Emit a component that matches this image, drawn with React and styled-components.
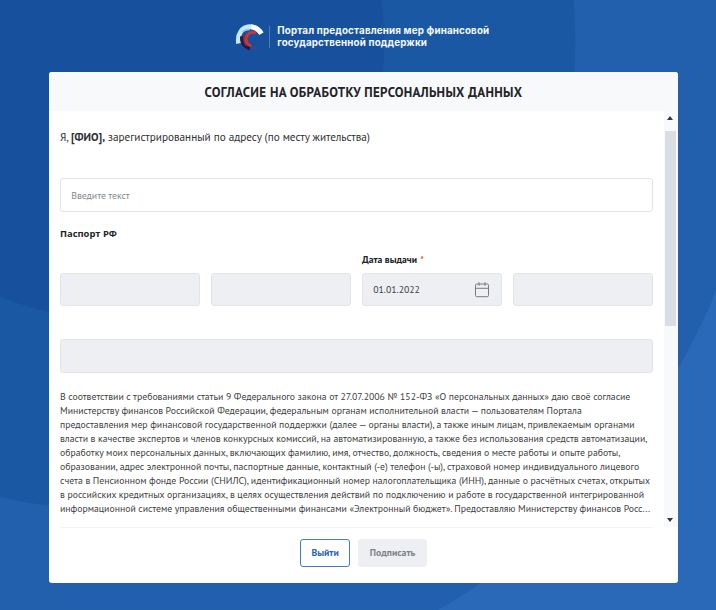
import React from "react";
import styled, { createGlobalStyle } from "styled-components";

const GlobalStyle = createGlobalStyle`
  *, *::before, *::after { box-sizing: border-box; }
  body { margin: 0; background: #2a69b8; font-family: "PT Sans", "Noto Sans", sans-serif; color: #2e3033; }
`;

const Page = styled.main`
  width: 716px;
  height: 610px;
  overflow: hidden;
  display: flex;
  flex-direction: column;
  background: radial-gradient(
    circle at 108px 42px,
    #17519d 276px, #1b58a3 277px,
    #1b58a3 467px, #2260ae 468px,
    #2260ae 656.5px, #2a69b8 657.5px
  );
`;

const Brand = styled.header`
  height: 72.3px;
  padding: 23px 0 0 235px;
  display: flex;
  align-items: flex-start;
`;

const Logo = styled.svg`
  width: 29px;
  height: 28px;
  flex: none;
`;

const BrandDivider = styled.div`
  width: 1px;
  height: 22px;
  margin: 3px 7.3px 0 5px;
  background: #4e7bb7;
`;

const BrandName = styled.div`
  margin-top: 1.7px;
  font: 650 9.8px/12.6px Inter, sans-serif;
  letter-spacing: 0.16px;
  color: #f4f8ff;
  white-space: nowrap;
`;

const Card = styled.section`
  width: 628.7px;
  height: 510.9px;
  margin-left: 49px;
  border-radius: 3px;
  overflow: hidden;
  background: #fff;
  display: flex;
  flex-direction: column;
`;

const CardHeader = styled.h1`
  margin: 0;
  height: 38.7px;
  flex: none;
  background: #f8f9fb;
  font-size: 13px;
  letter-spacing: 0.32px;
  line-height: 41px;
  font-weight: 700;
  color: #222427;
  text-align: center;
  white-space: nowrap;
`;

const CardBody = styled.div`
  display: flex;
  height: 416px;
  flex: none;
`;

const Content = styled.div`
  width: 604px;
  margin-left: 11px;
  flex: none;
  display: flex;
  flex-direction: column;
`;

const Intro = styled.p`
  margin: 19px 0 0;
  height: 14px;
  font-size: 11.2px;
  line-height: 14px;
  white-space: nowrap;
`;

const Field = styled.div`
  width: ${(p) => p.$width || "592.8px"};
  height: 33.6px;
  flex: none;
  border: 1px solid #e1e4ea;
  border-radius: 3px;
  background: ${(p) => (p.$disabled ? "#edeff3" : "#fff")};
  padding: 0 11px 0 10.3px;
  display: flex;
  align-items: center;
  justify-content: space-between;
  font-size: 9.75px;
  color: ${(p) => (p.$disabled ? "#3b3d40" : "#84878c")};
`;

const AddressField = styled(Field)`
  margin-top: 34px;
  padding-top: 1px;
`;

const WideField = styled(Field)`
  margin-top: 33px;
`;

const SectionTitle = styled.h2`
  margin: 15.7px 0 0;
  height: 14px;
  font: 700 9.4px/14px "Open Sans", "Noto Sans", sans-serif;
  color: #222427;
`;

const FieldRow = styled.div`
  margin-top: 11.4px;
  width: 592.8px;
  display: grid;
  grid-template-columns: repeat(4, 1fr);
  column-gap: 11.1px;
  align-items: end;
`;

const Label = styled.div`
  height: 20.2px;
  font-size: 9.7px;
  line-height: 14px;
  font-weight: 700;
  color: #222427;
`;

const Required = styled.span`
  margin-left: 0.8px;
  color: #e0583a;
`;

const CalendarIcon = styled.svg`
  width: 16px;
  height: 18px;
`;

const Terms = styled.p`
  margin: 17.1px 0 0;
  font-size: 9.74px;
  line-height: 13.92px;
  color: #3b3d40;
`;

const TermsLine = styled.span`
  display: block;
  white-space: nowrap;
`;

const ScrollTrack = styled.div`
  width: 13.7px;
  padding-right: 1px;
  background: #f8f9fb;
  display: flex;
  flex-direction: column;
  align-items: center;
`;

const ScrollArrow = styled.svg`
  width: 6px;
  height: 4px;
  margin: ${(p) => p.$margin};
  fill: #34373b;
`;

const ScrollThumb = styled.div`
  width: 11.4px;
  height: 194.7px;
  background: #d9dde5;
`;

const Footer = styled.footer`
  margin-left: 11px;
  width: 592.8px;
  border-top: 1px solid #f2f3f5;
  padding-top: 10.7px;
  display: flex;
  justify-content: center;
  gap: 8.3px;
  padding-left: 14px;
`;

const Button = styled.button`
  width: ${(p) => p.$width};
  height: 28.6px;
  padding: 1px 0 0;
  border: 1px solid ${(p) => (p.$muted ? "#edeff3" : "#437cc4")};
  border-radius: 3px;
  background: ${(p) => (p.$muted ? "#edeff3" : "#fff")};
  color: ${(p) => (p.$muted ? "#7d8289" : "#2765b5")};
  font: 700 9.75px/14px "PT Sans", "Noto Sans", sans-serif;
`;

const termsLines = [
  "В соответствии с требованиями статьи 9 Федерального закона от 27.07.2006 № 152-ФЗ «О персональных данных» даю своё согласие",
  "Министерству финансов Российской Федерации, федеральным органам исполнительной власти — пользователям Портала",
  "предоставления мер финансовой государственной поддержки (далее — органы власти), а также иным лицам, привлекаемым органами",
  "власти в качестве экспертов и членов конкурсных комиссий, на автоматизированную, а также без использования средств автоматизации,",
  "обработку моих персональных данных, включающих фамилию, имя, отчество, должность, сведения о месте работы и опыте работы,",
  "образовании, адрес электронной почты, паспортные данные, контактный (-е) телефон (-ы), страховой номер индивидуального лицевого",
  "счета в Пенсионном фонде России (СНИЛС), идентификационный номер налогоплательщика (ИНН), данные о расчётных счетах, открытых",
  "в российских кредитных организациях, в целях осуществления действий по подключению и работе в государственной интегрированной",
  "информационной системе управления общественными финансами «Электронный бюджет». Предоставляю Министерству финансов Росс...",
];

export default function App() {
  return (
    <>
      <GlobalStyle />
      <Page>
        <Brand>
          <Logo viewBox="0 0 29 28" fill="none">
            <path d="M3.6 20.5C2 10.5 7.6 3.9 14.6 3.7c5.1-.1 9.3 2.7 11.8 6.9" stroke="#c6e8f6" strokeWidth="4.8" />
            <path d="M16 3.8c4.5.4 8.2 2.9 10.4 6.8" stroke="#f4fcff" strokeWidth="4.8" />
            <path d="M7 9.2c2-2 4.6-2.9 8-2.7" stroke="#8fcbe6" strokeWidth="1.4" />
            <path d="M6.8 13.4C6.2 19.6 9.4 24.4 15.4 25.4" stroke="#1f1c4d" strokeWidth="3.4" />
            <path d="M15.2 25.2c2.6.4 4.6 0 6.4-1" stroke="#3b4a86" strokeWidth="2.2" />
            <path d="M10 11.2c-2 3.6-1.4 8.4 1.6 11.4" stroke="#7d2744" strokeWidth="2" />
            <path d="M20.8 9.7c-5.2-1.5-9.6 1.6-9.8 6-.2 3.6 2 6.2 5.4 7.2" stroke="#c93635" strokeWidth="3" />
          </Logo>
          <BrandDivider />
          <BrandName>
            Портал предоставления мер финансовой
            <br />
            государственной поддержки
          </BrandName>
        </Brand>
        <Card>
          <CardHeader>СОГЛАСИЕ НА ОБРАБОТКУ ПЕРСОНАЛЬНЫХ ДАННЫХ</CardHeader>
          <CardBody>
            <Content>
              <Intro>
                Я, <b>[ФИО],</b> зарегистрированный по адресу (по месту жительства)
              </Intro>
              <AddressField>Введите текст</AddressField>
              <SectionTitle>Паспорт РФ</SectionTitle>
              <FieldRow>
                <Field $disabled $width="100%" />
                <Field $disabled $width="100%" />
                <div>
                  <Label>
                    Дата выдачи <Required>*</Required>
                  </Label>
                  <Field $disabled $width="100%">
                    01.01.2022
                    <CalendarIcon viewBox="0 0 16 18" fill="none" stroke="#777b81">
                      <rect x="1.5" y="3" width="13" height="12.7" rx="1.2" />
                      <path d="M1.5 7.3h13M5 1.2v3.6M11 1.2v3.6" />
                    </CalendarIcon>
                  </Field>
                </div>
                <Field $disabled $width="100%" />
              </FieldRow>
              <WideField $disabled />
              <Terms>
                {termsLines.map((line) => (
                  <TermsLine key={line}>{line}</TermsLine>
                ))}
              </Terms>
            </Content>
            <ScrollTrack>
              <ScrollArrow $margin="5px 0 11px" viewBox="0 0 6 4">
                <path d="M3 0l3 4H0z" />
              </ScrollArrow>
              <ScrollThumb />
              <ScrollArrow $margin="auto 0 4.5px" viewBox="0 0 6 4">
                <path d="M0 0h6L3 4z" />
              </ScrollArrow>
            </ScrollTrack>
          </CardBody>
          <Footer>
            <Button $width="50px">Выйти</Button>
            <Button $width="68.4px" $muted>
              Подписать
            </Button>
          </Footer>
        </Card>
      </Page>
    </>
  );
}
